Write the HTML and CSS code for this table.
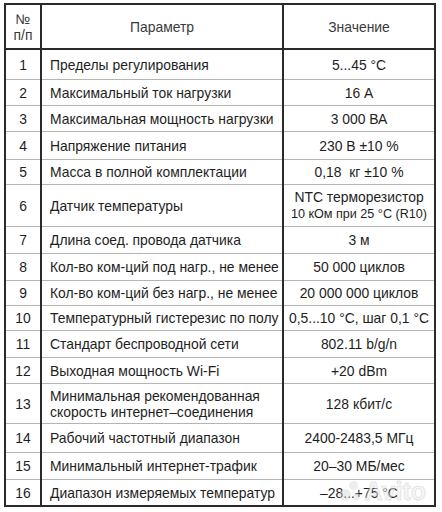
FILE: index.html
```html
<!DOCTYPE html>
<html lang="ru">
<head>
<meta charset="utf-8">
<link rel="stylesheet" href="styles.css">
</head>
<body>
<div class="wrap">
<table class="spec">
  <colgroup>
    <col class="c-num">
    <col class="c-param">
    <col class="c-val">
  </colgroup>
  <thead>
    <tr class="head">
      <th class="num">№<br>п/п</th>
      <th class="param">Параметр</th>
      <th class="val">Значение</th>
    </tr>
  </thead>
  <tbody>
    <tr class="h30"><td class="num">1</td><td class="param">Пределы регулирования</td><td class="val">5...45 °C</td></tr>
    <tr class="h26"><td class="num">2</td><td class="param">Максимальный ток нагрузки</td><td class="val">16 А</td></tr>
    <tr class="h26"><td class="num">3</td><td class="param">Максимальная мощность нагрузки</td><td class="val">3 000 ВА</td></tr>
    <tr class="h28"><td class="num">4</td><td class="param">Напряжение питания</td><td class="val">230 В ±10 %</td></tr>
    <tr class="h25"><td class="num">5</td><td class="param">Масса в полной комплектации</td><td class="val">0,18&nbsp; кг ±10 %</td></tr>
    <tr class="h42"><td class="num">6</td><td class="param">Датчик температуры</td><td class="val">NTC терморезистор<br><span class="small">10 кОм при 25 °C (R10)</span></td></tr>
    <tr class="h27"><td class="num">7</td><td class="param">Длина соед. провода датчика</td><td class="val">3 м</td></tr>
    <tr class="h27"><td class="num">8</td><td class="param">Кол-во ком-ций под нагр., не менее</td><td class="val">50 000 циклов</td></tr>
    <tr class="h25"><td class="num">9</td><td class="param">Кол-во ком-ций без нагр., не менее</td><td class="val">20 000 000 циклов</td></tr>
    <tr class="h25"><td class="num">10</td><td class="param">Температурный гистерезис по полу</td><td class="val">0,5...10 °C, шаг 0,1 °C</td></tr>
    <tr class="h27"><td class="num">11</td><td class="param">Стандарт беспроводной сети</td><td class="val">802.11 b/g/n</td></tr>
    <tr class="h26"><td class="num">12</td><td class="param">Выходная мощность Wi-Fi</td><td class="val">+20 dBm</td></tr>
    <tr class="h40"><td class="num">13</td><td class="param">Минимальная рекомендованная скорость интернет–соединения</td><td class="val">128 кбит/с</td></tr>
    <tr class="h29"><td class="num">14</td><td class="param">Рабочий частотный диапазон</td><td class="val">2400-2483,5 МГц</td></tr>
    <tr class="h27"><td class="num">15</td><td class="param">Минимальный интернет-трафик</td><td class="val">20–30 МБ/мес</td></tr>
    <tr class="h26"><td class="num">16</td><td class="param">Диапазон измеряемых температур</td><td class="val">–28...+75 °C</td></tr>
  </tbody>
</table>
<div class="watermark"><span class="dots"><i></i><i></i><i></i></span>Avito</div>
</div>
</body>
</html>
```

FILE: styles.css
```css
html, body {
  margin: 0;
  padding: 0;
  background: #ffffff;
}

.wrap {
  position: relative;
  padding: 3px 0 0 4px;
  width: 442px;
  height: 512px;
  box-sizing: border-box;
}

.spec {
  border-collapse: collapse;
  width: 432px;
  font-family: "Liberation Sans", Arial, sans-serif;
  font-size: 13.9px;
  color: #1e1e1e;
  table-layout: fixed;
  border: 2px solid #2a2a2a;
}

.c-num { width: 36px; }
.c-param { width: 242px; }

.spec th, .spec td {
  padding: 0;
  border-top: 1px solid #b4b4b4;
  border-bottom: 1px solid #b4b4b4;
  border-left: 2px solid #2a2a2a;
  border-right: 2px solid #2a2a2a;
  vertical-align: middle;
  line-height: 16px;
  white-space: nowrap;
}

.spec th {
  font-weight: normal;
  color: #3a3a3a;
  height: 43px;
  border-bottom: 2px solid #2a2a2a;
}

.spec .num {
  text-align: center;
}

.spec .param {
  text-align: left;
  padding-left: 8px;
}

.spec th.param {
  text-align: center;
  padding-left: 0;
}

.spec .val {
  text-align: center;
}

.h25 td { height: 24px; }
.h26 td { height: 25px; }
.h27 td { height: 26px; }
.h28 td { height: 27px; }
.h29 td { height: 28px; }
.h30 td { height: 29px; }
.h40 td { height: 39px; }
.h42 td { height: 41px; }

.spec tr.h40 td.param {
  white-space: normal;
  padding-right: 4px;
}

.small {
  font-size: 12.6px;
}

.watermark {
  position: absolute;
  right: 16px;
  bottom: 10px;
  font-family: "Liberation Sans", Arial, sans-serif;
  font-size: 25px;
  line-height: 22px;
  font-weight: bold;
  color: rgba(238, 238, 238, 0.5);
  -webkit-text-stroke: 1px rgba(190, 190, 190, 0.35);
  display: flex;
  align-items: center;
  gap: 3px;
  pointer-events: none;
}

.dots {
  position: relative;
  width: 22px;
  height: 22px;
}

.dots i {
  position: absolute;
  border-radius: 50%;
  background: rgba(215, 215, 215, 0.45);
}

.dots i:nth-child(1) { width: 12px; height: 12px; left: 0; top: 9px; }
.dots i:nth-child(2) { width: 9px; height: 9px; left: 10px; top: 1px; }
.dots i:nth-child(3) { width: 7px; height: 7px; left: 14px; top: 13px; }
```
